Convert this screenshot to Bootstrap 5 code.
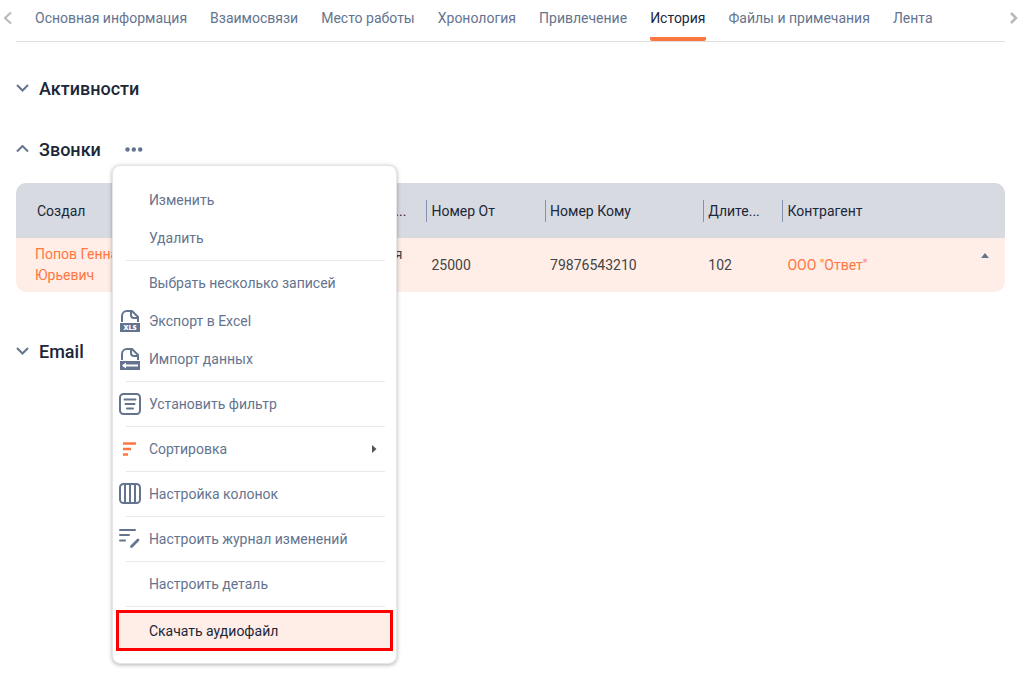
<!DOCTYPE html>
<html lang="ru">
<head>
<meta charset="utf-8">
<meta name="viewport" content="width=device-width, initial-scale=1">
<title>История</title>
<link href="https://cdn.jsdelivr.net/npm/bootstrap@5.3.0/dist/css/bootstrap.min.css" rel="stylesheet">
<style>
:root { --slate: #64748f; --ink: #1c2739; --accent: #ff7640; --peach: #ffeee7; }
body { font-family: Roboto, "Liberation Sans", sans-serif; font-size: 14px; line-height: 20px; color: var(--slate); }
svg { display: block; }
.tab-bar { height: 42px; padding: 0 3px; }
.tab-bar .scroll-btn { width: 13px; height: 36px; }
.tab-bar .scroll-next { width: 16px; }
.tab-list { border-bottom: 1px solid #dfdfdf; padding-left: 19px; gap: 23px; }
.tab-list .nav-link { color: var(--slate); padding: 8px 0 10px; height: 41px; white-space: nowrap; }
.tab-list .nav-link.active { color: var(--ink); border-bottom: 4px solid var(--accent); border-radius: 2px; }
.plain-btn { border: 0; background: none; padding: 0; color: inherit; }
.sections { padding: 34px 19px 0 16px; }
.section-head { height: 26px; }
.section-head .toggle { gap: 10px; }
.section-title { font-size: 18px; line-height: 24px; font-weight: 500; color: var(--ink); }
.calls { margin: 35px 0 47px; }
.menu-anchor { margin-left: 24px; }
.calls-table { table-layout: fixed; border-collapse: separate; border-spacing: 0; border-radius: 10px; overflow: hidden; color: var(--ink); margin-top: 20px; }
.calls-table th { background: #d7dae1; height: 55px; font-weight: 400; padding: 0; vertical-align: middle; }
.calls-table th span { line-height: 22px; padding: 0 16px 0 4px; border-left: 1px solid #8592ae; }
.calls-table th:first-child span { border: 0; padding-left: 21px; }
.calls-table th .clipped { padding-right: 20px; }
.calls-table td { background: var(--peach); height: 54px; padding: 0 0 0 5px; line-height: 21px; color: #444; }
.calls-table td:first-child { padding-left: 19px; }
.calls-table a { color: var(--accent); text-decoration: none; }
.calls-table .row-toggle { margin: 0 16px 20px 0; line-height: 0; }
.actions-menu { top: 25px; left: -13px; width: 285px; padding: 15px 3px 12px; border: 1px solid #e6e6e6; border-radius: 8px; font-size: 14px; box-shadow: 0 1px 4px rgba(0,0,0,.3); }
.actions-menu .dropdown-item { height: 38px; padding: 0 16px 0 3px; gap: 8px; color: var(--slate); line-height: 20px; }
.actions-menu .dropdown-divider { margin: 3px 8px 3px 10px; border-color: #e9e9e9; opacity: 1; }
.actions-menu .item-icon { width: 22px; height: 24px; flex: none; }
.actions-menu .dropdown-item.marked { height: 41px; padding-left: 0; border: 3px solid #f00; background: var(--peach); color: var(--ink); }
</style>
</head>
<body class="min-vh-100">
<nav class="tab-bar d-flex" aria-label="Разделы">
  <button class="plain-btn scroll-btn d-flex align-items-center" aria-label="Назад"><svg width="10" height="14" viewBox="0 0 10 14" fill="none" stroke="#b8b8b8" stroke-width="2"><path d="M8 1.500L2 7l6 5.500"/></svg></button>
  <ul class="nav tab-list flex-grow-1 flex-nowrap">
    <li><a class="nav-link" href="#">Основная информация</a></li>
    <li><a class="nav-link" href="#">Взаимосвязи</a></li>
    <li><a class="nav-link" href="#">Место работы</a></li>
    <li><a class="nav-link" href="#">Хронология</a></li>
    <li><a class="nav-link" href="#">Привлечение</a></li>
    <li><a class="nav-link active" aria-current="page" href="#">История</a></li>
    <li><a class="nav-link" href="#">Файлы и примечания</a></li>
    <li><a class="nav-link" href="#">Лента</a></li>
  </ul>
  <button class="plain-btn scroll-btn scroll-next d-flex align-items-center justify-content-center" aria-label="Вперёд"><svg width="10" height="14" viewBox="0 0 10 14" fill="none" stroke="#b8b8b8" stroke-width="2.500"><path d="M3 2l5 5-5 5"/></svg></button>
</nav>

<main class="sections">
  <section class="section-head d-flex align-items-center">
    <button class="plain-btn toggle d-flex align-items-center"><svg width="13" height="10" viewBox="0 0 13 10" fill="none" stroke="#64748f" stroke-width="2"><path d="M1 1l5.500 5.500L12 1"/></svg><span class="section-title">Активности</span></button>
  </section>

  <section class="calls">
    <div class="section-head d-flex align-items-center">
      <button class="plain-btn toggle d-flex align-items-center"><svg width="13" height="10" viewBox="0 0 13 10" fill="none" stroke="#64748f" stroke-width="2"><path d="M1 6.500l5.500-5.500L12 6.500"/></svg><span class="section-title">Звонки</span></button>
      <div class="dropdown menu-anchor">
        <button class="plain-btn d-block" aria-label="Действия" aria-expanded="true"><svg width="18" height="20" viewBox="0 0 18 20" fill="#64748f"><circle cx="2.500" cy="9.500" r="2.200"/><circle cx="8.800" cy="9.500" r="2.200"/><circle cx="15.200" cy="9.500" r="2.200"/></svg></button>
        <ul class="dropdown-menu actions-menu show">
          <li><button class="dropdown-item d-flex align-items-center"><span class="item-icon"></span>Изменить</button></li>
          <li><button class="dropdown-item d-flex align-items-center"><span class="item-icon"></span>Удалить</button></li>
          <li><hr class="dropdown-divider"></li>
          <li><button class="dropdown-item d-flex align-items-center"><span class="item-icon"></span>Выбрать несколько записей</button></li>
          <li><button class="dropdown-item d-flex align-items-center"><svg class="item-icon" viewBox="0 0 22 24" fill="none" stroke="#64748f" stroke-width="2"><path d="M3 13V7a5 5 0 0 1 5-5h5l6 6v5"/><path d="M12 2v4a3 3 0 0 0 3 3h4"/><rect x="1" y="14" width="20" height="9" fill="#64748f" stroke="none"/><text x="11" y="21" text-anchor="middle" fill="#fff" stroke="none" font-family="Open Sans" font-size="7" font-weight="800">XLS</text></svg>Экспорт в Excel</button></li>
          <li><button class="dropdown-item d-flex align-items-center"><svg class="item-icon" viewBox="0 0 22 24" fill="none" stroke="#64748f" stroke-width="2"><path d="M3 13V7a5 5 0 0 1 5-5h5l6 6v5"/><path d="M12 2v4a3 3 0 0 0 3 3h4"/><rect x="1" y="14" width="20" height="9" fill="#64748f" stroke="none"/><path d="M4 18.500h15" stroke="#fff"/><path d="M3 18.500l4-3v6z" fill="#fff" stroke="none"/></svg>Импорт данных</button></li>
          <li><hr class="dropdown-divider"></li>
          <li><button class="dropdown-item d-flex align-items-center"><svg class="item-icon" viewBox="0 0 22 24" fill="none" stroke="#64748f" stroke-width="2" stroke-linecap="round"><rect x="1" y="2" width="20" height="20" rx="3.500"/><path d="M5.500 7.500h11M6.500 12h9M8 16.500h6"/></svg>Установить фильтр</button></li>
          <li><hr class="dropdown-divider"></li>
          <li><button class="dropdown-item d-flex align-items-center"><svg class="item-icon" viewBox="0 0 22 24" fill="none" stroke="#ff7640" stroke-width="2.400"><path d="M4 6.500h13M4 12h8M4 17.500h5"/></svg>Сортировка<svg class="ms-auto" width="6" height="8" viewBox="0 0 6 8" fill="#555"><path d="M1 0l4.500 4L1 8z"/></svg></button></li>
          <li><hr class="dropdown-divider"></li>
          <li><button class="dropdown-item d-flex align-items-center"><svg class="item-icon" viewBox="0 0 22 24" fill="none" stroke="#64748f" stroke-width="2"><rect x="1" y="2" width="20" height="19" rx="3.500"/><path d="M6 2v19M11 2v19M16 2v19"/></svg>Настройка колонок</button></li>
          <li><hr class="dropdown-divider"></li>
          <li><button class="dropdown-item d-flex align-items-center"><svg class="item-icon" viewBox="0 0 22 24" fill="none" stroke="#64748f" stroke-width="2" stroke-linecap="round"><path d="M1 3h15M1 8h9M1 13.500h5"/><path d="M12.500 19.500l6.500-6.500" stroke-width="2.800"/></svg>Настроить журнал изменений</button></li>
          <li><hr class="dropdown-divider"></li>
          <li><button class="dropdown-item d-flex align-items-center"><span class="item-icon"></span>Настроить деталь</button></li>
          <li><hr class="dropdown-divider"></li>
          <li><button class="dropdown-item marked d-flex align-items-center"><span class="item-icon"></span>Скачать аудиофайл</button></li>
        </ul>
      </div>
    </div>
    <table class="calls-table w-100">
      <colgroup><col style="width:26%"><col style="width:15.500%"><col style="width:12%"><col style="width:16%"><col style="width:8%"><col></colgroup>
      <thead>
        <tr>
          <th scope="col"><span class="d-block text-truncate">Создал</span></th>
          <th scope="col"><span class="d-block text-end clipped">Направление...</span></th>
          <th scope="col"><span class="d-block text-truncate">Номер От</span></th>
          <th scope="col"><span class="d-block text-truncate">Номер Кому</span></th>
          <th scope="col"><span class="d-block text-truncate">Длите...</span></th>
          <th scope="col"><span class="d-block text-truncate">Контрагент</span></th>
        </tr>
      </thead>
      <tbody>
        <tr>
          <td><a href="#">Попов Геннадий<br>Юрьевич</a></td>
          <td class="text-end pe-4">Исходящая<br>&nbsp;</td>
          <td>25000</td>
          <td>79876543210</td>
          <td>102</td>
          <td><div class="d-flex justify-content-between align-items-center"><a href="#">ООО "Ответ"</a><button class="plain-btn row-toggle" aria-label="Свернуть"><svg width="8" height="5" viewBox="0 0 8 5" fill="#64748f"><path d="M4 0l4 5H0z"/></svg></button></div></td>
        </tr>
      </tbody>
    </table>
  </section>

  <section class="section-head d-flex align-items-center">
    <button class="plain-btn toggle d-flex align-items-center"><svg width="13" height="10" viewBox="0 0 13 10" fill="none" stroke="#64748f" stroke-width="2"><path d="M1 1l5.500 5.500L12 1"/></svg><span class="section-title">Email</span></button>
  </section>
</main>
<script src="https://cdn.jsdelivr.net/npm/bootstrap@5.3.0/dist/js/bootstrap.bundle.min.js"></script>
</body>
</html>
